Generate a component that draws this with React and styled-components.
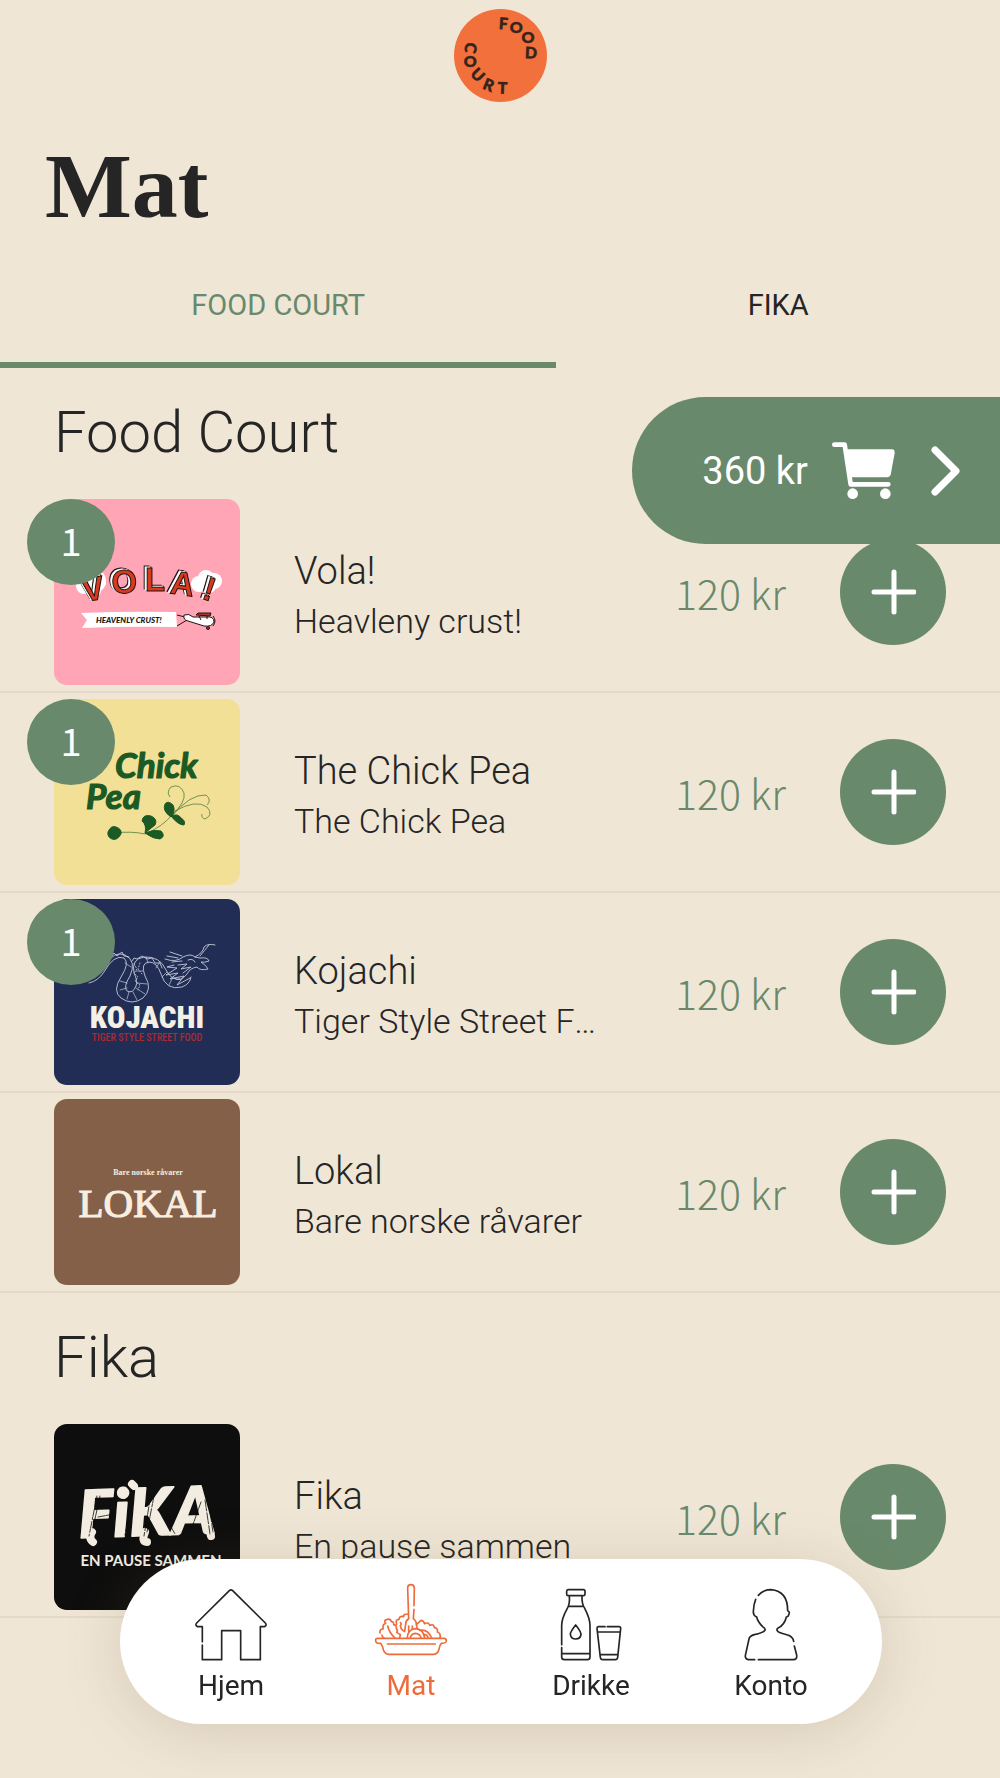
import React, { useState } from "react";
import styled, { createGlobalStyle } from "styled-components";

const GlobalStyle = createGlobalStyle`
  * {
    box-sizing: border-box;
  }
  body {
    margin: 0;
    background: #efe6d6;
    color: #252525;
    font-family: Roboto, "Liberation Sans", sans-serif;
  }
  button {
    font-family: inherit;
    border: none;
    cursor: pointer;
  }
`;

const sections = [
  {
    title: "Food Court",
    items: [
      { name: "Vola!", description: "Heavleny crust!", count: 1, Logo: VolaLogo },
      { name: "The Chick Pea", description: "The Chick Pea", count: 1, Logo: ChickPeaLogo },
      { name: "Kojachi", description: "Tiger Style Street Food", count: 1, Logo: KojachiLogo },
      { name: "Lokal", description: "Bare norske råvarer", count: 0, Logo: LokalLogo },
    ],
  },
  {
    title: "Fika",
    items: [{ name: "Fika", description: "En pause sammen", count: 0, Logo: FikaLogo }],
  },
];

const navItems = [
  { label: "Hjem", Icon: HomeIcon },
  { label: "Mat", Icon: FoodIcon },
  { label: "Drikke", Icon: DrinkIcon },
  { label: "Konto", Icon: AccountIcon },
];

function App() {
  const [tab, setTab] = useState("Food Court");

  return (
    <Page>
      <GlobalStyle />
      <Header>
        <CourtLogo />
        <Title>Mat</Title>
      </Header>
      <Tabs>
        {["Food Court", "Fika"].map((name) => (
          <Tab key={name} $active={tab === name} onClick={() => setTab(name)}>
            {name}
          </Tab>
        ))}
      </Tabs>
      <CartButton>
        360 kr
        <CartIcon />
        <ChevronIcon />
      </CartButton>
      <main>
        {sections.map((section) => (
          <section key={section.title}>
            <SectionTitle>{section.title}</SectionTitle>
            <List>
              {section.items.map((item) => (
                <MenuItem key={item.name} item={item} />
              ))}
            </List>
          </section>
        ))}
      </main>
      <BottomNav>
        {navItems.map(({ label, Icon }) => (
          <NavLink key={label} href="#" $active={label === "Mat"}>
            <Icon />
            {label}
          </NavLink>
        ))}
      </BottomNav>
    </Page>
  );
}

export default App;

function MenuItem({ item }) {
  const { name, description, count, Logo } = item;
  return (
    <Row>
      <Thumb>
        <Logo />
        {count > 0 && <Badge>{count}</Badge>}
      </Thumb>
      <Info>
        <Name>{name}</Name>
        <Description>{description}</Description>
      </Info>
      <Price>120 kr</Price>
      <AddButton aria-label={`Legg til ${name}`}>
        <PlusIcon />
      </AddButton>
    </Row>
  );
}

function CourtLogo() {
  const letters = [
    ["F", 149, 44, 4],
    ["O", 187, 55, 0],
    ["O", 223, 84, 0],
    ["D", 232, 132, 2],
    ["C", 50, 117, 100],
    ["O", 49, 158, 0],
    ["U", 71, 198, 46],
    ["R", 104, 229, 22],
    ["T", 146, 238, 2],
  ];
  return (
    <LogoSvg viewBox="0 0 280 280" role="img" aria-label="Food Court">
      <circle cx="140" cy="140" r="140" fill="#f2703c" />
      <g
        fill="#35241b"
        stroke="#35241b"
        strokeWidth="1.5"
        fontFamily="Lato, sans-serif"
        fontWeight="900"
        fontSize="48"
        textAnchor="middle"
      >
        {letters.map(([char, x, y, angle], i) => (
          <text key={i} transform={`translate(${x} ${y}) rotate(${angle})`} y="17">
            {char}
          </text>
        ))}
      </g>
    </LogoSvg>
  );
}

function CartIcon() {
  return (
    <svg width="63" height="57" viewBox="0 0 189 171" fill="#fff" aria-hidden="true">
      <path
        d="M7 8 H38 L56 127 H169"
        fill="none"
        stroke="#fff"
        strokeWidth="14"
        strokeLinecap="round"
        strokeLinejoin="round"
      />
      <path d="M44 22 H180 Q189 23 188 33 L176 98 Q174 105 166 106 H56 Z" />
      <circle cx="62" cy="155" r="16" />
      <circle cx="160" cy="155" r="16" />
    </svg>
  );
}

function ChevronIcon() {
  return (
    <svg width="30" height="50" viewBox="0 0 30 50" aria-hidden="true">
      <path d="M4 4 L25 25 L4 46" fill="none" stroke="#fff" strokeWidth="7" strokeLinecap="round" strokeLinejoin="round" />
    </svg>
  );
}

function PlusIcon() {
  return (
    <svg width="46" height="46" viewBox="0 0 46 46" aria-hidden="true">
      <path d="M24 3 V43 M4 23 H44" fill="none" stroke="#fff" strokeWidth="5" strokeLinecap="round" />
    </svg>
  );
}

function VolaLogo() {
  const letters = [
    ["V", 41, 101, -10],
    ["O", 71, 94, -4],
    ["L", 101, 92, 0],
    ["A", 127, 96, 8],
    ["!", 152, 101, 18],
  ];
  return (
    <Artwork viewBox="0 0 186 186" $color="#ffa5b5">
      <g fill="#fff">
        <circle cx="30" cy="87" r="8" />
        <circle cx="40" cy="82" r="12" />
        <circle cx="40" cy="91" r="7" />
        <circle cx="47" cy="84" r="5" />
        <circle cx="145" cy="85" r="8" />
        <circle cx="152" cy="79" r="8" />
        <circle cx="160" cy="82" r="8" />
        <circle cx="155" cy="87" r="7" />
      </g>
      <RaisedLetters>
        {letters.map(([char, x, y, angle]) => (
          <text key={char} transform={`translate(${x} ${y}) rotate(${angle})`}>
            {char}
          </text>
        ))}
      </RaisedLetters>
      <path d="M27 114 Q70 112 122 113 L123 128 Q75 127 28 129 L33 121 Z" fill="#fff" />
      <text x="42" y="124" fontFamily="Lato, sans-serif" fontWeight="900" fontStyle="italic" fontSize="8" fill="#1c1413">
        HEAVENLY CRUST!
      </text>
      <g stroke="#1c1413" strokeWidth="1" strokeLinejoin="round">
        <path d="M123 116 L131 118 M123 127 L133 121" fill="none" />
        <path d="M130 116 Q135 114 139 118 L152 118 Q160 117 160 123 Q158 128 150 127 L134 122 Q129 121 130 116Z" fill="#fff" />
        <path d="M142 116 L144 114 H157 L156 117 Z" fill="#b3382a" />
        <path d="M145 117 L147 121 M153 117 L153 120 M159 117 Q163 122 159 127" fill="none" />
        <circle cx="154" cy="129" r="1.5" fill="#b3382a" />
      </g>
    </Artwork>
  );
}

function ChickPeaLogo() {
  return (
    <Artwork viewBox="0 0 186 186" $color="#f2e097">
      <g
        fill="#1b5a24"
        stroke="#1b5a24"
        strokeWidth="1.2"
        strokeLinejoin="round"
        fontFamily="Lato, sans-serif"
        fontWeight="700"
        fontStyle="italic"
      >
        <text x="61" y="79" fontSize="35">
          Chick
        </text>
        <text x="32" y="110" fontSize="35">
          Pea
        </text>
      </g>
      <g fill="none" stroke="#4f7f3d" strokeWidth="0.8">
        <path d="M60 134 Q78 132 91 135 Q108 128 118 116 Q132 103 130 94 Q126 84 117 88 Q112 93 116 98" />
        <path d="M118 117 Q136 95 152 96 Q158 101 153 106" />
        <path d="M121 112 Q142 100 153 108 Q160 116 151 120 Q147 119 148 115" />
      </g>
      <g fill="#1b5a24" stroke="#1b5a24" strokeWidth="1">
        <path d="M54 133 Q57 126 62 128 Q68 130 67 135 Q63 142 58 140 Q53 138 54 133Z" />
        <path d="M91 134 Q93 126 88 122 Q89 115 97 117 Q104 120 101 126 Q96 130 91 134Z" />
        <path d="M91 134 Q100 130 107 132 Q112 137 106 140 Q99 140 91 134Z" />
        <path d="M117 118 Q108 112 111 105 Q114 101 119 106 Q122 112 117 118Z" />
        <path d="M117 117 Q124 114 127 119 Q132 122 130 126 Q124 126 117 117Z" />
      </g>
    </Artwork>
  );
}

function KojachiLogo() {
  return (
    <Artwork viewBox="0 0 186 186" $color="#222d55">
      <g fill="none" stroke="#c3c8d8" strokeWidth="0.9" strokeLinecap="round" strokeLinejoin="round">
        <path d="M35 84 Q44 82 50 73 Q60 55 70 59 Q76 64 67 78 Q58 92 67 99 Q78 107 89 99 Q99 90 91 77 Q86 64 95 63 Q103 63 107 75 Q112 92 128 88 Q136 85 137 78" />
        <path d="M35 81 Q46 76 51 67 Q60 51 71 56 Q83 62 76 77 Q69 88 73 92 Q79 95 82 87 Q84 82 80 74 Q77 60 90 58 Q106 57 112 71 Q118 82 126 80" />
        <path d="M66 82 L73 84 M66 91 L73 89 M73 100 L75 93 M83 101 L79 93 M91 95 L82 89 M93 85 L83 84 M71 64 L77 68 M89 72 L82 72 M94 64 L92 58 M102 69 L106 63 M108 78 L113 73 M115 86 L118 80" strokeWidth="0.7" />
        <path d="M80 65 L83 70 L80 74 L84 78 L81 82 L86 86 L84 91 M86 64 L84 70 L88 75" strokeDasharray="1 2" />
        <path d="M58 57 L60 54 L63 57 L68 53 L70 57 L75 58 M78 62 L80 59 L83 60 L88 57 L93 60 L98 59 L101 64 L106 64 L108 69" />
        <path d="M111 60 Q122 64 129 58 Q137 54 141 58 L146 59 Q154 58 155 62 Q150 64 147 63 Q153 67 154 70 Q146 72 143 68 Q136 69 133 75 Q126 84 120 79" />
        <path d="M113 57 L124 59 M116 53 L128 57 M120 66 L113 68 L123 69 L112 76 L124 74 L116 80 L130 77 L123 86 L136 79 M118 63 L128 62 M124 66 L133 65 L127 70 L137 68 L129 74" />
        <path d="M141 58 Q149 54 150 48 Q154 44 161 46 M146 57 Q151 51 155 46 M134 61 Q139 59 141 63" />
      </g>
      <text x="93" y="129" textAnchor="middle" fontFamily="'Roboto Condensed', Roboto, sans-serif" fontWeight="900" fontSize="31" fill="#f5f0e6">
        KOJACHI
      </text>
      <text x="93" y="142" textAnchor="middle" fontFamily="'Roboto Condensed', Roboto, sans-serif" fontWeight="500" fontSize="10" fill="#a82c33">
        TIGER STYLE STREET FOOD
      </text>
    </Artwork>
  );
}

function LokalLogo() {
  return (
    <Artwork viewBox="0 0 186 186" $color="#846049">
      <g fill="#f7eee0" fontFamily="'Liberation Serif', serif" textAnchor="middle">
        <text x="94" y="76" fontSize="8" fontWeight="700">
          Bare norske råvarer
        </text>
        <text x="94" y="118" fontSize="41" stroke="#f7eee0" strokeWidth="1.2">
          LOKAL
        </text>
      </g>
    </Artwork>
  );
}

function FikaLogo() {
  return (
    <Artwork viewBox="0 0 186 186" $color="#0e0e0e">
      <text
        transform="translate(25 114) rotate(-2)"
        fontFamily="Lato, sans-serif"
        fontWeight="900"
        fontStyle="italic"
        fontSize="66"
        fill="#f3ece1"
        stroke="#f3ece1"
        strokeWidth="1.5"
        strokeLinejoin="round"
      >
        FiKA
      </text>
      <path
        d="M38 108 Q34 114 39 118 M91 108 Q87 118 93 118 M156 108 L157 112 M78 60 L80 62"
        fill="none"
        stroke="#f3ece1"
        strokeWidth="8"
        strokeLinecap="round"
      />
      <g fill="none" stroke="#0e0e0e" strokeWidth="0.8" strokeLinecap="round" strokeDasharray="7 1 3 2">
        <path d="M43 72 L35 112 M46 72 L39 104 M44 93 L60 90 M76 84 L71 111 M97 70 L90 112 M100 72 L93 108 M124 74 L108 88 M111 92 L121 110" />
        <path d="M151 76 L156 110 M154 74 L159 108 M147 78 L137 106" />
      </g>
      <text x="97" y="142" textAnchor="middle" fontFamily="Lato, sans-serif" fontWeight="700" fontSize="15" fill="#f3ece1">
        EN PAUSE SAMMEN
      </text>
    </Artwork>
  );
}

function HomeIcon() {
  return (
    <NavSvg viewBox="0 0 216 216">
      <path d="M22 158 V113 H8 Q-1 109 5 102 L103 5 Q108 0 113 5 L211 102 Q217 109 208 113 H196 V212 H137 V125 H80 V212 H22 V168" />
    </NavSvg>
  );
}

function FoodIcon() {
  return (
    <NavSvg viewBox="0 0 216 216">
      <path d="M117 50 L118 -3 Q117 -13 108 -13 Q98 -13 98 -3 L101 89 Q92 94 92 106 L89 127 M117 61 L115 89 Q124 94 124 107 L127 119 M101 127 V111 M112 119 V111" />
      <path d="M8 148 H208 Q215 149 214 156 Q213 163 200 163 Q195 166 192 181 Q188 196 176 196 H42 Q29 195 25 182 Q21 166 16 163 Q2 163 2 155 Q1 148 8 148 Z M37 165 H181" />
      <path d="M27 147 Q20 143 21 138 M15 132 Q13 121 25 119 Q21 106 32 103 Q24 94 37 91 Q47 89 49 98 Q57 97 56 107 Q66 109 64 119 Q70 124 65 130 L76 137 L74 147 M38 111 Q42 130 60 147" />
      <path d="M65 106 Q60 91 72 91 Q73 80 86 83 Q83 75 99 75 M76 101 Q81 105 76 110 Q78 123 88 127" />
      <path d="M125 106 L138 94 Q145 94 149 104 Q160 98 164 109 Q177 104 178 116 Q190 117 187 129 Q198 132 195 147" />
      <path d="M97 147 Q98 121 121 119 Q145 120 149 147 M106 147 Q108 134 121 133 Q136 134 138 147 M134 124 Q158 119 170 147 M146 136 Q156 135 160 147" />
    </NavSvg>
  );
}

function DrinkIcon() {
  return (
    <NavSvg viewBox="0 0 216 216">
      <path d="M39 2 H85 Q90 2 90 7 V16 Q90 20 85 20 H39 Q35 20 35 16 V7 Q35 2 39 2 Z M43 20 Q45 45 37 58 Q20 88 20 110 V167 M81 20 Q80 45 89 58 Q105 88 105 110 V204 Q105 212 97 212 H28 Q20 212 20 204 V176 M42 52 H83 M20 194 H105" />
      <path d="M62 108 Q46 128 46 136 Q48 150 62 150 Q77 149 78 136 Q77 126 62 108 Z" />
      <path d="M150 113 H130 Q126 113 126 118 L136 205 Q137 212 143 212 H181 Q187 212 188 205 L197 119 Q198 113 192 113 H157 M127 129 H196 M135 197 H188" />
    </NavSvg>
  );
}

function AccountIcon() {
  return (
    <NavSvg viewBox="0 0 216 216">
      <path d="M70 19 Q86 2 108 2 Q158 6 158 65 Q166 68 161 78 Q160 83 154 84 Q149 108 128 118 Q122 124 132 130 Q140 134 158 138 Q174 143 176 157" />
      <path d="M178 171 L185 198 Q187 212 175 212 H70 M59 212 H40 Q30 210 31 200 L42 150 Q44 141 58 137 Q84 132 90 124 Q92 118 83 113 Q68 98 65 84 Q54 79 55 67 Q56 45 62 31" />
    </NavSvg>
  );
}

const Page = styled.div`
  position: relative;
  min-height: 100vh;
  padding-bottom: 158px;
`;

const Header = styled.header`
  display: flex;
  flex-direction: column;
  align-items: center;
  gap: 36px;
  padding: 9px 45px 12px;
`;

const LogoSvg = styled.svg`
  width: 93px;
  height: 93px;
`;

const Title = styled.h1`
  align-self: flex-start;
  margin: 0;
  font-family: "Liberation Serif", serif;
  font-size: 92px;
  line-height: 96px;
  font-weight: 700;
`;

const Tabs = styled.nav`
  display: flex;
`;

const Tab = styled.button`
  flex: 1 1 auto;
  padding: 42px 0 40px;
  background: none;
  border-bottom: 6px solid ${(p) => (p.$active ? "#69896c" : "transparent")};
  color: ${(p) => (p.$active ? "#69896c" : "#252525")};
  font-size: 29px;
  line-height: 34px;
  text-transform: uppercase;
`;

const CartButton = styled.button`
  position: absolute;
  z-index: 2;
  top: 397px;
  right: 0;
  display: flex;
  align-items: center;
  gap: 24px;
  height: 147px;
  padding: 0 39px 0 70px;
  border-radius: 74px 0 0 74px;
  background: #69896c;
  color: #fff;
  font-size: 38px;

  svg:last-child {
    margin-left: 12px;
  }
`;

const SectionTitle = styled.h2`
  margin: 0;
  padding: 32px 54px 29px;
  font-size: 58px;
  line-height: 64px;
  font-weight: 350;
`;

const List = styled.ul`
  margin: 0;
  padding: 0;
  list-style: none;
`;

const Row = styled.li`
  display: flex;
  align-items: center;
  gap: 54px;
  padding: 6px 54px;
  border-bottom: 2px solid #e5dac9;
`;

const Thumb = styled.div`
  position: relative;
  flex: none;
`;

const Artwork = styled.svg`
  display: block;
  width: 186px;
  height: 186px;
  border-radius: 13px;
  background: ${(p) => p.$color};
`;

const RaisedLetters = styled.g`
  fill: #d8391f;
  stroke: #1c1413;
  stroke-width: 1;
  font-family: "Liberation Sans", sans-serif;
  font-size: 33px;
  font-weight: 700;
  text-anchor: middle;
  filter: drop-shadow(-2px -1px 0 #fff) drop-shadow(-1px -1px 0 #1c1413);
`;

const Badge = styled.span`
  position: absolute;
  top: 0;
  left: -27px;
  width: 88px;
  height: 86px;
  border-radius: 50%;
  background: #69896c;
  color: #fff;
  font-family: "Noto Sans CJK JP", sans-serif;
  font-size: 38px;
  line-height: 82px;
  text-align: center;
`;

const Info = styled.div`
  flex: 1;
  min-width: 0;
  padding: 8px 10px 0 0;
  line-height: 50px;
`;

const Name = styled.h3`
  margin: 0;
  font-size: 38px;
  font-weight: 350;
`;

const Description = styled.p`
  margin: 0;
  overflow: hidden;
  font-size: 34px;
  font-weight: 350;
  text-overflow: ellipsis;
  white-space: nowrap;
`;

const Price = styled.span`
  color: #69896c;
  font-family: "Noto Sans CJK JP", sans-serif;
  font-size: 41px;
  font-weight: 300;
  line-height: 48px;
  white-space: nowrap;
`;

const AddButton = styled.button`
  display: flex;
  flex: none;
  align-items: center;
  justify-content: center;
  width: 106px;
  height: 106px;
  padding: 0;
  border-radius: 50%;
  background: #69896c;
`;

const BottomNav = styled.nav`
  position: fixed;
  z-index: 3;
  bottom: 54px;
  left: 120px;
  right: 118px;
  display: flex;
  padding: 30px 21px 21px;
  border-radius: 83px;
  background: #fff;
  box-shadow: 0 8px 60px rgba(120, 95, 60, 0.2);
`;

const NavLink = styled.a`
  display: flex;
  flex: 1;
  flex-direction: column;
  align-items: center;
  gap: 8px;
  color: ${(p) => (p.$active ? "#ee6c3b" : "#252525")};
  font-size: 28px;
  line-height: 34px;
  text-decoration: none;
`;

const NavSvg = styled.svg.attrs({ "aria-hidden": true })`
  width: 72px;
  height: 72px;
  overflow: visible;
  fill: none;
  stroke: currentColor;
  stroke-width: 5;
  stroke-linecap: round;
  stroke-linejoin: round;
`;
